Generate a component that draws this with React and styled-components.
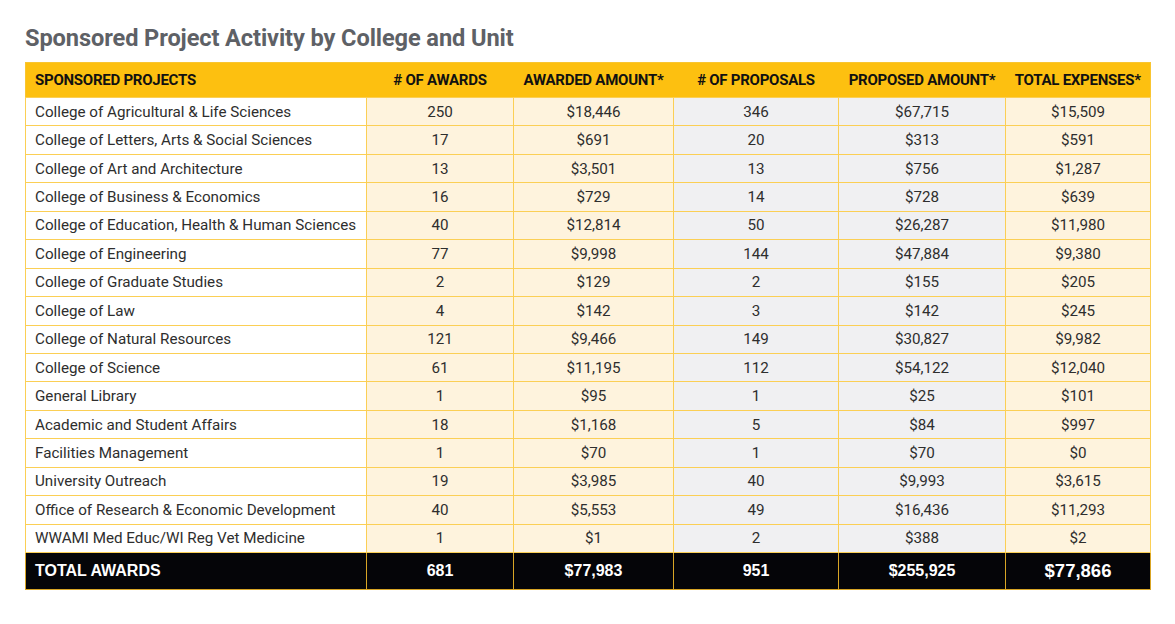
import React from 'react';
import styled, { createGlobalStyle } from 'styled-components';

const rows = [
    ['College of Agricultural & Life Sciences', '250', '$18,446', '346', '$67,715', '$15,509'],
    ['College of Letters, Arts & Social Sciences', '17', '$691', '20', '$313', '$591'],
    ['College of Art and Architecture', '13', '$3,501', '13', '$756', '$1,287'],
    ['College of Business & Economics', '16', '$729', '14', '$728', '$639'],
    ['College of Education, Health & Human Sciences', '40', '$12,814', '50', '$26,287', '$11,980'],
    ['College of Engineering', '77', '$9,998', '144', '$47,884', '$9,380'],
    ['College of Graduate Studies', '2', '$129', '2', '$155', '$205'],
    ['College of Law', '4', '$142', '3', '$142', '$245'],
    ['College of Natural Resources', '121', '$9,466', '149', '$30,827', '$9,982'],
    ['College of Science', '61', '$11,195', '112', '$54,122', '$12,040'],
    ['General Library', '1', '$95', '1', '$25', '$101'],
    ['Academic and Student Affairs', '18', '$1,168', '5', '$84', '$997'],
    ['Facilities Management', '1', '$70', '1', '$70', '$0'],
    ['University Outreach', '19', '$3,985', '40', '$9,993', '$3,615'],
    ['Office of Research & Economic Development', '40', '$5,553', '49', '$16,436', '$11,293'],
    ['WWAMI Med Educ/WI Reg Vet Medicine', '1', '$1', '2', '$388', '$2'],
];

const headers = ['SPONSORED PROJECTS', '# OF AWARDS', 'AWARDED AMOUNT*', '# OF PROPOSALS', 'PROPOSED AMOUNT*', 'TOTAL EXPENSES*'];
const widths = [341, 147, 160, 165, 167, 145];
const tones = ['white', 'cream', 'cream', 'grey', 'grey', 'cream'];
const totals = ['TOTAL AWARDS', '681', '$77,983', '951', '$255,925', '$77,866'];

const fills = { white: '#ffffff', cream: '#fef3dd', grey: '#f0f0f2' };

function App() {
    return (
        <>
            <GlobalStyle />
            <Page>
                <Title>Sponsored Project Activity by College and Unit</Title>
                <Table>
                    <colgroup>
                        {widths.map((w, i) => <col key={i} style={{ width: w }} />)}
                    </colgroup>
                    <thead>
                        <tr>
                            {headers.map((h, i) => (
                                <HeadCell key={h} $first={i === 0}>{h}</HeadCell>
                            ))}
                        </tr>
                    </thead>
                    <tbody>
                        {rows.map((r) => (
                            <BodyRow key={r[0]}>
                                {r.map((v, i) => (
                                    <Cell key={i} $tone={tones[i]} $first={i === 0}>{v}</Cell>
                                ))}
                            </BodyRow>
                        ))}
                        <TotalRow>
                            {totals.map((v, i) => (
                                <TotalCell key={i} $first={i === 0} $big={i === 5}>{v}</TotalCell>
                            ))}
                        </TotalRow>
                    </tbody>
                </Table>
            </Page>
        </>
    );
}

const GlobalStyle = createGlobalStyle`
    body {
        margin: 0;
        background: #ffffff;
        font-family: Roboto, "Liberation Sans", sans-serif;
    }
`;

const Page = styled.div`
    padding: 24px 25px 0 25px;
`;

const Title = styled.h1`
    margin: 0 0 10px 0;
    font-family: Roboto, "Liberation Sans", sans-serif;
    font-size: 23.6px;
    line-height: 28px;
    font-weight: 700;
    color: #5e6166;
    letter-spacing: -0.1px;
`;

const Table = styled.table`
    width: 1125px;
    border-collapse: collapse;
    table-layout: fixed;
    border: 1.5px solid #f9c531;
`;

const HeadCell = styled.th`
    height: 34px;
    padding: 0 0 0 ${(p) => (p.$first ? '9px' : '0')};
    background: #fdc010;
    color: #111111;
    font-size: 15px;
    font-weight: 700;
    letter-spacing: -0.25px;
    text-align: ${(p) => (p.$first ? 'left' : 'center')};
    border: none;
`;

const BodyRow = styled.tr`
    height: 28.45px;
`;

const Cell = styled.td`
    padding: 0 0 0 ${(p) => (p.$first ? '9px' : '0')};
    background: ${(p) => fills[p.$tone]};
    border: 1.5px solid #fbcf55;
    color: #2e2e2e;
    font-size: 15.2px;
    text-align: ${(p) => (p.$first ? 'left' : 'center')};
    white-space: nowrap;
`;

const TotalRow = styled.tr`
    height: 37px;
`;

const TotalCell = styled.td`
    padding: 0 0 0 ${(p) => (p.$first ? '9px' : '0')};
    background: #050508;
    border: 1.5px solid #d9a525;
    color: #ffffff;
    font-family: "Liberation Sans", Arial, sans-serif;
    font-weight: 700;
    font-size: ${(p) => (p.$big ? '18.5px' : '16px')};
    text-align: ${(p) => (p.$first ? 'left' : 'center')};
`;

export default App;
